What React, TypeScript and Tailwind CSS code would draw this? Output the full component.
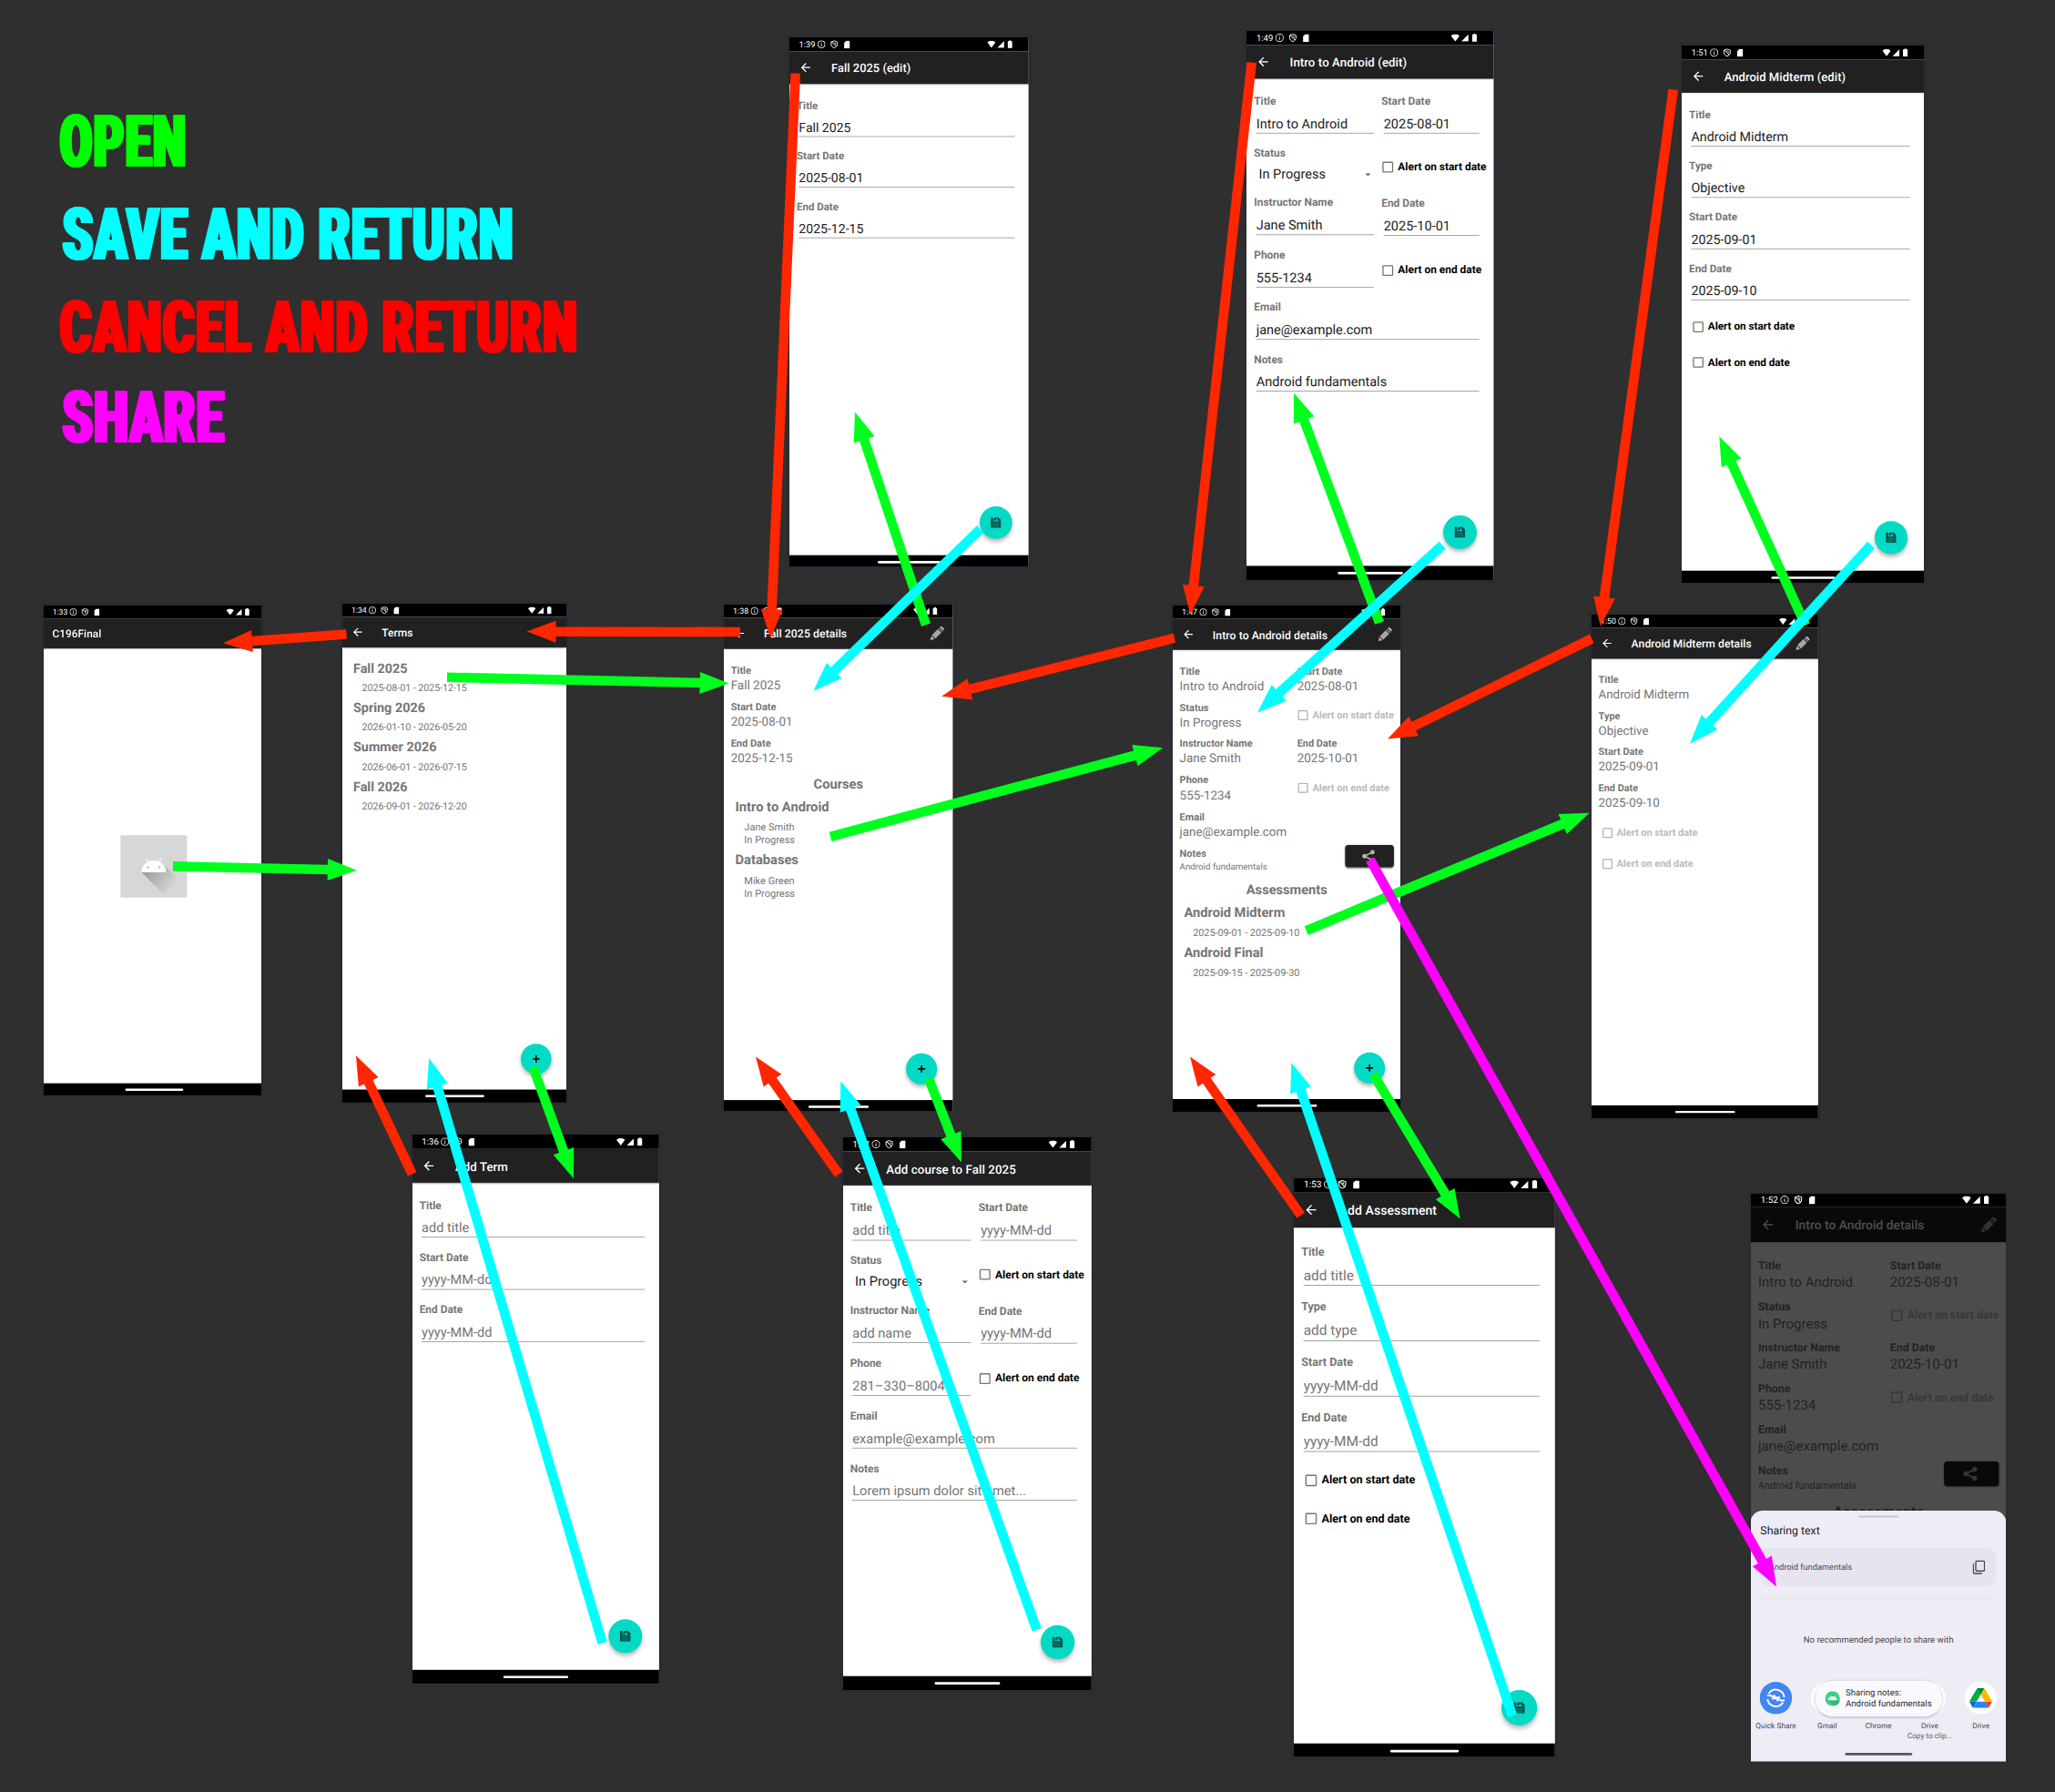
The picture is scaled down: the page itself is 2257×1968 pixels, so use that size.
import React from "react";

/* ---------- status bar icons ---------- */

const StatusIcons = () => (
  <>
    <svg viewBox="0 0 14 14" className="ml-[4px] h-[14px] w-[14px]" fill="none" stroke="#fff" strokeWidth="1.400">
      <circle cx="7" cy="7" r="6.200" />
      <path d="M7 6.200V10.400M7 3.600V5.100" />
    </svg>
    <svg viewBox="0 0 14 14" className="ml-[8px] h-[14px] w-[14px]" fill="none" stroke="#fff" strokeWidth="1.500">
      <path d="M7 0.900L12.300 2.900V7C12.300 9.800 9.900 12.200 7 13.200C4.100 12.200 1.700 9.800 1.700 7V2.900Z" />
      <path d="M2.800 2.800L10.600 10.800" />
      <path d="M6.500 4.300A2.600 2.600 0 0 1 9.500 7.300" />
    </svg>
    <svg viewBox="0 0 10 13" className="ml-[10px] h-[13px] w-[10px]" fill="#fff">
      <path d="M3.600 0H9a1 1 0 0 1 1 1V12a1 1 0 0 1-1 1H1a1 1 0 0 1-1-1V3.600Z" />
    </svg>
  </>
);

const StatusBar = ({ time }: { time: string }) => (
  <div className="flex h-6 shrink-0 items-center bg-black pl-[16.500px] pr-[28.500px] text-white">
    <span className="w-[27.500px] text-[14.500px] leading-[25px]">{time}</span>
    <StatusIcons />
    <div className="ml-auto flex items-center">
      <svg viewBox="0 0 14 12" className="h-[12px] w-[14.500px]" fill="#fff">
        <path d="M7 12L0 2.800C4 -0.900 10 -0.900 14 2.800Z" />
      </svg>
      <svg viewBox="0 0 12 12" className="ml-[2.500px] h-[12.500px] w-[12.500px]" fill="#fff">
        <path d="M12 0V12H0Z" />
      </svg>
      <svg viewBox="0 0 8 13" className="ml-[5.500px] h-[13.500px] w-[8.300px]" fill="#fff">
        <path d="M2.500 0H5.500V1.400H7a1 1 0 0 1 1 1V12a1 1 0 0 1-1 1H1a1 1 0 0 1-1-1V2.400a1 1 0 0 1 1-1H2.500Z" />
      </svg>
    </div>
  </div>
);

/* ---------- screen icons ---------- */

const BackArrow = () => (
  <svg viewBox="0 0 24 24" className="h-6 w-6" fill="#fff">
    <path d="M20 11H7.830l5.590-5.590L12 4l-8 8 8 8 1.410-1.410L7.830 13H20v-2z" />
  </svg>
);

const Pencil = () => (
  <svg viewBox="0 0 26 26" className="h-[26px] w-[26px]">
    <path d="M0.500 25.500L2.600 17.600L8.400 23.400Z" fill="#a9a9a9" />
    <path d="M3.600 16.300L14.200 5.700L20.300 11.800L9.700 22.400Z" fill="#b4b4b4" />
    <path d="M5.500 18.300L16.200 7.600M7.600 20.400L18.300 9.700" stroke="#6f6f6f" strokeWidth="0.900" />
    <path d="M15.300 4.600L17 2.900L23.100 9L21.400 10.700Z" fill="#8d8d8d" />
    <path d="M18 1.900L19.200 0.900Q20.500 0 21.800 1.200L24.800 4.200Q26 5.500 25 6.800L24.100 8Z" fill="#c0c0c0" />
  </svg>
);

const ShareIcon = () => (
  <svg viewBox="0 0 24 24" className="h-6 w-6" fill="#b5b5b5" stroke="#b5b5b5">
    <path d="M19 4.800L5 12L19 19.200" fill="none" strokeWidth="2.600" />
    <circle cx="19.200" cy="4.800" r="3.600" />
    <circle cx="4.800" cy="12" r="3.600" />
    <circle cx="19.200" cy="19.200" r="3.600" />
  </svg>
);

const SaveIcon = () => (
  <svg viewBox="0 0 18 18" className="h-[18px] w-[18px]">
    <path d="M1.200 0H4V7H13V0.500L17.500 4V16.800a1.200 1.200 0 0 1-1.200 1.200H1.200A1.200 1.200 0 0 1 0 16.800V1.200A1.200 1.200 0 0 1 1.200 0Z" fill="#04524b" />
    <path d="M5 3L7 0H14V5.500H11.500V3H9V5.500H5Z" fill="#04524b" />
    <path d="M3.400 9.500H14.400V16H3.400Z" fill="#067e73" />
    <path d="M3.400 11.700H14.400M3.400 13.900H14.400" stroke="#04524b" strokeWidth="0.800" />
  </svg>
);

const PlusIcon = () => (
  <svg viewBox="0 0 14 14" className="h-[14px] w-[14px]" stroke="#000" strokeWidth="2.600">
    <path d="M7 0.500V13.500M0.500 7H13.500" />
  </svg>
);

/* ---------- phone shell ---------- */

type PhoneProps = {
  /* place of the frame on the board */
  frame: string;
  /* zoom of the 411dp wide screen */
  zoom: string;
  time: string;
  title: string;
  back?: boolean;
  edit?: boolean;
  fab?: "save" | "plus";
  dim?: boolean;
  sheet?: React.ReactNode;
  children?: React.ReactNode;
};

const Phone = ({ frame, zoom, time, title, back = true, edit, fab, dim, sheet, children }: PhoneProps) => (
  <div className={`absolute overflow-hidden outline-[3px] outline-[#2b2c31] ${frame}`}>
    <div className={`relative flex h-[914.300px] w-[411.430px] origin-top-left flex-col bg-white ${zoom}`}>
      <StatusBar time={time} />
      <div className="flex h-14 shrink-0 items-center bg-[#212121] pl-4 pr-[15px] text-white shadow-[0_1px_2px_rgba(0,0,0,0.35)]">
        {back && (
          <span className="mr-8">
            <BackArrow />
          </span>
        )}
        <span className="pt-px text-[20px] font-medium tracking-[0.120px] whitespace-nowrap">{title}</span>
        {edit && (
          <span className="ml-auto">
            <Pencil />
          </span>
        )}
      </div>
      <div className="relative flex-1 text-[#757575]">
        {children}
        {fab && (
          <div className="absolute right-[28.400px] bottom-[28px] flex h-14 w-14 items-center justify-center rounded-full bg-[#03dac5] shadow-[0_5px_7px_rgba(0,0,0,0.28)]">
            {fab === "save" ? <SaveIcon /> : <PlusIcon />}
          </div>
        )}
      </div>
      <div className="flex h-6 shrink-0 items-center justify-center bg-black">
        <div className="h-1 w-[108px] rounded-full bg-white" />
      </div>
      {dim && <div className="absolute inset-x-0 top-6 bottom-0 bg-black/70" />}
      {sheet}
    </div>
  </div>
);

/* ---------- form parts ---------- */

const Label = ({ children }: { children: string }) => (
  <div className="h-6 text-[18px] leading-[25px] font-bold whitespace-nowrap">{children}</div>
);

const Input = ({ label, value, hint }: { label: string; value: string; hint?: boolean }) => (
  <div className="mb-[21px]">
    <Label>{label}</Label>
    <div
      className={`mt-[10.800px] mr-3 ml-[3.700px] h-[31px] border-b border-[#7a7a7a] text-[22px] leading-[31.500px] whitespace-nowrap ${
        hint ? "text-[#757575]" : "text-[#212121]"
      }`}
    >
      {value}
    </div>
  </div>
);

const Spinner = ({ label, value }: { label: string; value: string }) => (
  <div className="mb-[19.900px]">
    <Label>{label}</Label>
    <div className="mt-[8.200px] flex h-[30px] items-center justify-between pt-px pr-[17px] pl-2 text-[22px] leading-[30px] text-[#212121]">
      {value}
      <svg viewBox="0 0 10 5" className="h-[5px] w-[10px]" fill="#6b6b6b">
        <path d="M0 0H10L5 5Z" />
      </svg>
    </div>
  </div>
);

const Check = ({ text, muted, className }: { text: string; muted?: boolean; className: string }) => (
  <div className={`flex h-12 shrink-0 items-center gap-[7.500px] ${className}`}>
    <div className={`h-[18px] w-[18px] rounded-[2px] border-2 ${muted ? "border-[#b0b0b0]" : "border-[#757575]"}`} />
    <span className={`text-[18px] font-bold whitespace-nowrap ${muted ? "text-[#bababa]" : "text-black"}`}>{text}</span>
  </div>
);

const Field = ({ label, value }: { label: string; value: string }) => (
  <div className="h-[65.900px]">
    <Label>{label}</Label>
    <div className="h-[30px] text-[22px] leading-[31px] whitespace-nowrap">{value}</div>
  </div>
);

const ListItem = ({ name, lines, dates }: { name: string; lines: string[]; dates?: boolean }) => (
  <div className="mb-[8.200px] pl-2">
    <div className="h-8 text-[24px] leading-8 font-bold whitespace-nowrap">{name}</div>
    <div className={`mt-[8.400px] pl-4 ${dates ? "tracking-[-0.150px]" : ""}`}>
      {lines.map((line) => (
        <div key={line} className="h-[23.800px] text-[18px] leading-[25px] whitespace-nowrap">
          {line}
        </div>
      ))}
    </div>
  </div>
);

/* ---------- screen bodies ---------- */

const DetailBody = ({ children }: { children?: React.ReactNode }) => (
  <div className="px-[12.500px] pt-[25.700px]">
    <div className="flex">
      <div className="w-[213px]">
        <Field label="Title" value="Intro to Android" />
        <Field label="Status" value="In Progress" />
        <Field label="Instructor Name" value="Jane Smith" />
        <Field label="Phone" value="555-1234" />
        <Field label="Email" value="jane@example.com" />
      </div>
      <div className="flex-1">
        <Field label="Start Date" value="2025-08-01" />
        <Check text="Alert on start date" muted className="mt-[2px] mb-[15.700px] pl-[2px]" />
        <Field label="End Date" value="2025-10-01" />
        <Check text="Alert on end date" muted className="mt-[2px] pl-[2px]" />
      </div>
    </div>
    <div className="flex items-start justify-between">
      <div>
        <Label>Notes</Label>
        <div className="-mt-px h-6 text-[16px] leading-[25px]">Android fundamentals</div>
      </div>
      <div className="-mt-[3px] flex h-10 w-[88px] items-center justify-center rounded-[6px] bg-[#212121] pr-[3px] shadow-[0_1px_3px_rgba(0,0,0,0.4)]">
        <ShareIcon />
      </div>
    </div>
    <div className="mt-[15.200px] mb-2 text-center text-[24px] leading-8 font-bold">Assessments</div>
    {children}
  </div>
);

type Course = { title: string; name: string; phone: string; email: string; notes: string; start: string; end: string; hint?: boolean };

const CourseForm = ({ title, name, phone, email, notes, start, end, hint }: Course) => (
  <div className="px-[12.500px] pt-[25.400px]">
    <div className="flex">
      <div className="w-[213px]">
        <Input label="Title" value={title} hint={hint} />
        <Spinner label="Status" value="In Progress" />
        <Input label="Instructor Name" value={name} hint={hint} />
        <Input label="Phone" value={phone} hint={hint} />
      </div>
      <div className="flex flex-1 flex-col">
        <Input label="Start Date" value={start} hint={hint} />
        <Check text="Alert on start date" className="mt-[11.300px] mb-[23.900px] pl-[2px]" />
        <Input label="End Date" value={end} hint={hint} />
        <Check text="Alert on end date" className="mt-[12.500px] pl-[2px]" />
      </div>
    </div>
    <Input label="Email" value={email} hint={hint} />
    <Input label="Notes" value={notes} hint={hint} />
  </div>
);

const TermForm = ({ values, hint }: { values: [string, string, string]; hint?: boolean }) => (
  <div className="px-[12.500px] pt-[25.700px]">
    <Input label="Title" value={values[0]} hint={hint} />
    <Input label="Start Date" value={values[1]} hint={hint} />
    <Input label="End Date" value={values[2]} hint={hint} />
  </div>
);

const AssessmentForm = ({ values, hint }: { values: [string, string, string, string]; hint?: boolean }) => (
  <div className="px-[12.500px] pt-[25.700px]">
    <Input label="Title" value={values[0]} hint={hint} />
    <Input label="Type" value={values[1]} hint={hint} />
    <Input label="Start Date" value={values[2]} hint={hint} />
    <Input label="End Date" value={values[3]} hint={hint} />
    <Check text="Alert on start date" className="mb-[12.300px] pl-[6.500px]" />
    <Check text="Alert on end date" className="pl-[6.500px]" />
  </div>
);

/* ---------- share sheet ---------- */

const Target = ({ label, sub, children }: { label: string; sub?: string; children?: React.ReactNode }) => (
  <div className="flex w-[82.300px] shrink-0 flex-col items-center">
    <div className="flex h-[52px] w-[52px] items-center justify-center overflow-hidden rounded-full bg-white">{children}</div>
    <div className="mt-[9.500px] text-[12px] leading-[17px] tracking-[0.100px] whitespace-nowrap text-[#46464f]">{label}</div>
    {sub && <div className="text-[12px] leading-[17px] whitespace-nowrap text-[#5c5c66]">{sub}</div>}
  </div>
);

const ShareSheet = () => (
  <div className="absolute inset-x-0 top-[510.500px] bottom-0 rounded-t-[20px] bg-[#eeecf4] text-[#1c1b1f]">
    <div className="mx-auto mt-[8px] h-[3.500px] w-[64px] rounded-full bg-[#c8c5d0]" />
    <div className="mt-[9px] ml-4 h-6 text-[18px] leading-[26px]">Sharing text</div>
    <div className="mx-4 mt-[16px] flex h-[62px] items-center justify-between rounded-[14px] bg-[#e6e4ee] pr-[18px] pl-[14px]">
      <span className="pt-px text-[13.500px] text-[#46464f]">Android fundamentals</span>
      <svg viewBox="0 0 20 24" className="h-6 w-5" fill="none" stroke="#46464f" strokeWidth="2">
        <rect x="5" y="2" width="14" height="16" rx="1.500" />
        <path d="M1 6V20.500A1.500 1.500 0 0 0 2.500 22H15" />
      </svg>
    </div>
    <div className="mx-4 mt-[17.500px] h-px bg-[#e0dee6]" />
    <div className="mt-[57px] text-center text-[14px] leading-5 text-[#46464f]">No recommended people to share with</div>
    <div className="mt-[57.500px] flex">
      <Target label="Quick Share">
        <div className="flex h-full w-full items-center justify-center bg-[#4285f4]">
          <svg viewBox="0 0 32 32" className="h-8 w-8" fill="none" stroke="#fff" strokeWidth="2.800">
            <path d="M4.500 9A13.500 13.500 0 0 1 29.400 14.500" />
            <path d="M27.500 23A13.500 13.500 0 0 1 2.600 17.500" />
            <path d="M2 12H8L14 15.500M30 20H24L18 16.500" />
            <path d="M9 17H15.500L13 10.500M23 15H16.500L19 21.500" strokeWidth="2.400" />
          </svg>
        </div>
      </Target>
      <Target label="Gmail" />
      <Target label="Chrome" />
      <Target label="Drive" sub="Copy to clip..." />
      <Target label="Drive">
        <svg viewBox="0 0 87.300 78" className="h-[32px] w-[36px]">
          <path d="m6.600 66.850 3.850 6.650c.8 1.400 1.950 2.500 3.300 3.300l13.750-23.800h-27.500c0 1.550.4 3.100 1.200 4.500z" fill="#0066da" />
          <path d="m43.650 25-13.750-23.800c-1.350.8-2.500 1.900-3.300 3.300l-25.400 44a9.060 9.060 0 0 0-1.200 4.500h27.500z" fill="#00ac47" />
          <path d="m73.550 76.800c1.350-.8 2.500-1.900 3.300-3.300l1.600-2.750 7.650-13.250c.8-1.400 1.200-2.950 1.200-4.500h-27.502l5.852 11.500z" fill="#ea4335" />
          <path d="m43.650 25 13.750-23.800c-1.350-.8-2.900-1.200-4.500-1.200h-18.500c-1.600 0-3.150.45-4.500 1.200z" fill="#00832d" />
          <path d="m59.800 53h-32.300l-13.750 23.800c1.350.8 2.900 1.200 4.500 1.200h50.800c1.600 0 3.150-.45 4.500-1.200z" fill="#2684fc" />
          <path d="m73.400 26.500-12.700-22c-.8-1.400-1.950-2.500-3.300-3.300l-13.750 23.800 16.150 28h27.450c0-1.550-.4-3.100-1.200-4.500z" fill="#ffba00" />
        </svg>
      </Target>
    </div>
    <div className="absolute top-[273.500px] left-[104px] flex h-[58px] w-[204px] items-center rounded-full bg-[#faf9ff] pl-[16px] shadow-[0_1px_4px_rgba(0,0,0,0.3)]">
      <svg viewBox="0 0 24 24" className="mr-[9px] h-6 w-6">
        <circle cx="12" cy="12" r="12" fill="#3dcf86" />
        <path d="M12 14.500H19.500L23.500 15.500A12 12 0 0 1 15 23.500L5 14.500Z" fill="#35b876" />
        <path d="M5 14.500A7 6 0 0 1 19 14.500Z" fill="#fff" />
        <path d="M7.500 7.500L9 10M16.500 7.500L15 10" stroke="#fff" strokeWidth="0.800" />
      </svg>
      <div className="text-[14px] leading-[16.600px] whitespace-nowrap text-[#2a2a2e]">
        Sharing notes:
        <br />
        Android fundamentals
      </div>
    </div>
    <div className="absolute bottom-[10px] left-1/2 h-1 w-[108px] -translate-x-1/2 rounded-full bg-[#57565c]" />
  </div>
);

const LauncherTile = () => (
  <div className="absolute top-[348px] left-[143.400px] flex h-[116px] w-[124px] items-center justify-center rounded-[2px] bg-[#d6d7d7]">
    <svg viewBox="0 0 124 116" className="h-[116px] w-[124px]">
      <defs>
        <linearGradient id="droid-shadow" x1="50" y1="68" x2="92" y2="104" gradientUnits="userSpaceOnUse">
          <stop offset="0" stopColor="#9fa0a0" />
          <stop offset="1" stopColor="#d6d7d7" />
        </linearGradient>
      </defs>
      <path d="M39 69L82 112L110 84L84 58Z" fill="url(#droid-shadow)" />
      <path d="M39 69A23 22 0 0 1 85 69Z" fill="#fff" />
      <path d="M48 43L53 52M76 43L71 52" stroke="#fff" strokeWidth="2" />
      <circle cx="51.500" cy="59.500" r="2" fill="#b9baba" />
      <circle cx="72.500" cy="59.500" r="2" fill="#b9baba" />
    </svg>
  </div>
);

/* ---------- arrows ---------- */

const GREEN = "#00ff1e";
const RED = "#ff2600";
const CYAN = "#00ffff";
const MAGENTA = "#ff00ff";

type Link = [string, number, number, number, number];

const links: Link[] = [
  [GREEN, 189.9, 951.4, 391.8, 955.7],
  [GREEN, 491, 743.8, 800.7, 750.6],
  [GREEN, 912, 918.9, 1277.3, 821.3],
  [GREEN, 1434.7, 1022.1, 1745.7, 892.7],
  [GREEN, 1017, 686.2, 939, 452.5],
  [GREEN, 1515, 684, 1421, 431.4],
  [GREEN, 1983, 686.6, 1888.3, 479.2],
  [GREEN, 585.5, 1172, 630, 1294.3],
  [GREEN, 1020, 1184.5, 1056, 1276.5],
  [GREEN, 1508.3, 1179.7, 1603.7, 1338.5],
  [RED, 380.5, 696.5, 245.1, 706.3],
  [RED, 813, 694, 578.5, 693.6],
  [RED, 1290, 700.7, 1034.3, 764.7],
  [RED, 1748.3, 701.4, 1524, 811.6],
  [RED, 873.7, 80.5, 846.3, 701],
  [RED, 1374.7, 68.6, 1307.3, 674.8],
  [RED, 1837.7, 98.4, 1757.7, 687.7],
  [RED, 452.7, 1289.5, 391, 1159.3],
  [RED, 921.3, 1289.6, 830, 1160.5],
  [RED, 1428.7, 1334.7, 1307, 1160.5],
  [CYAN, 1076.7, 581, 893.3, 758.8],
  [CYAN, 1584.3, 598.6, 1381, 782.4],
  [CYAN, 2055, 598.3, 1856, 816.8],
  [CYAN, 661.7, 1804.6, 471.2, 1162.2],
  [CYAN, 1138.7, 1790, 923.3, 1187.5],
  [CYAN, 1661, 1884, 1418.3, 1167.1],
  [MAGENTA, 1504.7, 944, 1951, 1742.4],
];

const arrowPoints = (x1: number, y1: number, x2: number, y2: number) => {
  const len = Math.hypot(x2 - x1, y2 - y1);
  const ux = (x2 - x1) / len;
  const uy = (y2 - y1) / len;
  const at = (along: number, side: number) =>
    `${(x1 + ux * along - uy * side).toFixed(1)},${(y1 + uy * along + ux * side).toFixed(1)}`;
  const neck = len - 32;
  return [at(0, 5.3), at(neck, 5.3), at(neck, 12), at(len, 0), at(neck, -12), at(neck, -5.3), at(0, -5.3)].join(" ");
};

/* ---------- board ---------- */

const Legend = () => (
  <div className="absolute top-[117.500px] left-[66px] text-[80px] leading-[77px] font-black whitespace-nowrap [text-shadow:-3.5px_0_currentColor,-1.75px_0_currentColor,1.75px_0_currentColor,3.5px_0_currentColor]">
    <div className="h-[102px] w-fit origin-left scale-x-[0.635] tracking-[3px] text-[#00ff00]">OPEN</div>
    <div className="ml-[2.500px] h-[102px] w-fit origin-left scale-x-[0.656] tracking-[3px] text-[#00ffff]">SAVE AND RETURN</div>
    <div className="h-[99px] w-fit origin-left scale-x-[0.657] tracking-[3px] text-[#ff0000]">CANCEL AND RETURN</div>
    <div className="ml-[2.500px] h-[99px] w-fit origin-left scale-x-[0.652] tracking-[3px] text-[#ff00ff]">SHARE</div>
  </div>
);

export default function App() {
  return (
    <div className="relative h-[1968px] w-[2257px] overflow-hidden bg-[#2f2f2f] font-['Roboto',sans-serif] [text-rendering:geometricPrecision]">
      <Legend />

      <Phone frame="left-[867px] top-[41px] w-[263px] h-[581px]" zoom="scale-[0.639]" time="1:39" title="Fall 2025 (edit)" fab="save">
        <TermForm values={["Fall 2025", "2025-08-01", "2025-12-15"]} />
      </Phone>

      <Phone frame="left-[1369.300px] top-[33.500px] w-[271.700px] h-[603.500px]" zoom="scale-[0.6605] -translate-y-[0.400px]" time="1:49" title="Intro to Android (edit)" fab="save">
        <CourseForm
          title="Intro to Android"
          name="Jane Smith"
          phone="555-1234"
          email="jane@example.com"
          notes="Android fundamentals"
          start="2025-08-01"
          end="2025-10-01"
        />
      </Phone>

      <Phone frame="left-[1846.700px] top-[50px] w-[266.600px] h-[589.500px]" zoom="scale-[0.648]" time="1:51" title="Android Midterm (edit)" fab="save">
        <AssessmentForm values={["Android Midterm", "Objective", "2025-09-01", "2025-09-10"]} />
      </Phone>

      <Phone frame="left-[47.500px] top-[665px] w-[239.600px] h-[538.700px]" zoom="scale-[0.5895]" time="1:33" title="C196Final" back={false}>
        <LauncherTile />
      </Phone>

      <Phone frame="left-[375.500px] top-[663px] w-[246.600px] h-[548px]" zoom="scale-[0.5995]" time="1:34" title="Terms" fab="plus">
        <div className="px-3 pt-[21.600px]">
          <ListItem dates name="Fall 2025" lines={["2025-08-01 - 2025-12-15"]} />
          <ListItem dates name="Spring 2026" lines={["2026-01-10 - 2026-05-20"]} />
          <ListItem dates name="Summer 2026" lines={["2026-06-01 - 2026-07-15"]} />
          <ListItem dates name="Fall 2026" lines={["2026-09-01 - 2026-12-20"]} />
        </div>
      </Phone>

      <Phone frame="left-[795.300px] top-[663.500px] w-[251.700px] h-[556px]" zoom="scale-[0.6117] -translate-y-[0.300px]" time="1:38" title="Fall 2025 details" edit fab="plus">
        <div className="px-[12.500px] pt-[25.700px]">
          <Field label="Title" value="Fall 2025" />
          <Field label="Start Date" value="2025-08-01" />
          <Field label="End Date" value="2025-12-15" />
          <div className="mt-[3.800px] mb-2 text-center text-[24px] leading-8 font-bold">Courses</div>
          <ListItem name="Intro to Android" lines={["Jane Smith", "In Progress"]} />
          <ListItem name="Databases" lines={["Mike Green", "In Progress"]} />
        </div>
      </Phone>

      <Phone frame="left-[1287.700px] top-[665.200px] w-[250.600px] h-[555.600px]" zoom="scale-[0.609]" time="1:47" title="Intro to Android details" edit fab="plus">
        <DetailBody>
          <ListItem dates name="Android Midterm" lines={["2025-09-01 - 2025-09-10"]} />
          <ListItem dates name="Android Final" lines={["2025-09-15 - 2025-09-30"]} />
        </DetailBody>
      </Phone>

      <Phone frame="left-[1748px] top-[675.200px] w-[249px] h-[553px]" zoom="scale-[0.6055]" time="1:50" title="Android Midterm details" edit>
        <div className="px-[12.500px] pt-[25.700px]">
          <Field label="Title" value="Android Midterm" />
          <Field label="Type" value="Objective" />
          <Field label="Start Date" value="2025-09-01" />
          <Field label="End Date" value="2025-09-10" />
          <Check text="Alert on start date" muted className="mt-[2.500px] mb-2 pl-[7.500px]" />
          <Check text="Alert on end date" muted className="pl-[7.500px]" />
        </div>
      </Phone>

      <Phone frame="left-[452.600px] top-[1246px] w-[271px] h-[604px]" zoom="scale-[0.6605] -translate-x-[0.600px]" time="1:36" title="Add Term" fab="save">
        <TermForm values={["add title", "yyyy-MM-dd", "yyyy-MM-dd"]} hint />
      </Phone>

      <Phone frame="left-[925.600px] top-[1249px] w-[273px] h-[607px]" zoom="scale-[0.6653] -translate-x-[0.600px] -translate-y-[0.400px]" time="1:37" title="Add course to Fall 2025" fab="save">
        <CourseForm
          title="add title"
          name="add name"
          phone="281–330–8004"
          email="example@example.com"
          notes="Lorem ipsum dolor sit amet..."
          start="yyyy-MM-dd"
          end="yyyy-MM-dd"
          hint
        />
      </Phone>

      <Phone frame="left-[1420.600px] top-[1294px] w-[287px] h-[635px]" zoom="scale-[0.6993] -translate-x-[0.600px] -translate-y-[1.700px]" time="1:53" title="Add Assessment" fab="save">
        <AssessmentForm values={["add title", "add type", "yyyy-MM-dd", "yyyy-MM-dd"]} hint />
      </Phone>

      <Phone
        frame="left-[1922.600px] top-[1311px] w-[280.700px] h-[624px]"
        zoom="scale-[0.684] -translate-x-[0.600px] -translate-y-[1.600px]"
        time="1:52"
        title="Intro to Android details"
        edit
        dim
        sheet={<ShareSheet />}
      >
        <DetailBody />
      </Phone>

      <svg viewBox="0 0 2257 1968" className="absolute inset-0 h-[1968px] w-[2257px]">
        {links.map(([color, x1, y1, x2, y2]) => (
          <polygon key={`${x1}-${y1}`} points={arrowPoints(x1, y1, x2, y2)} fill={color} />
        ))}
      </svg>
    </div>
  );
}
